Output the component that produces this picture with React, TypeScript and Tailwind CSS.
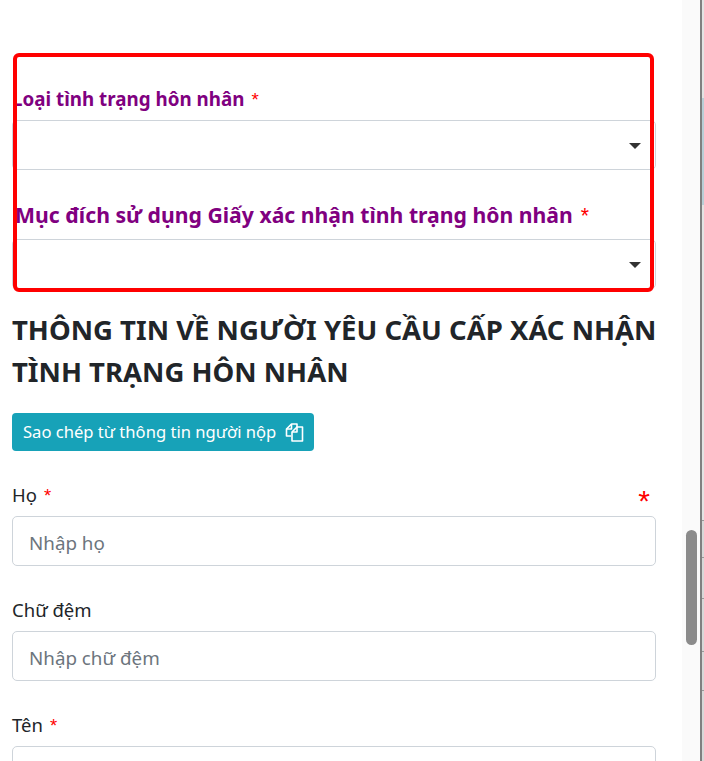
import React from 'react';

const Star: React.FC = () => <span className="ml-[2px] font-['Liberation_Sans',sans-serif] font-normal text-[#ff0000]"> *</span>;

const SelectBox: React.FC = () => (
  <div className="relative h-[50px] rounded-[5px] border border-[#ced4da] bg-white">
    <span className="absolute right-[14px] top-[22px] h-0 w-0 border-x-[6px] border-t-[6px] border-x-transparent border-t-[#333333]" />
  </div>
);

const TextField: React.FC<{ label: string; placeholder?: string; required?: boolean }> = ({ label, placeholder, required }) => (
  <div className="mb-[31px]">
    <label className="mb-[8px] block h-[26px] text-[18.5px] leading-[26px] text-[#212529]">
      {label}
      {required && <Star />}
    </label>
    <div className="flex h-[50px] items-center rounded-[5px] border border-[#ced4da] bg-white px-4 pt-[4px] text-[18.8px] text-[#6c757d]">
      {placeholder}
    </div>
  </div>
);

export default function App() {
  return (
    <div className="flex h-[761px] w-[704px] overflow-hidden bg-white font-['Noto_Sans',sans-serif]">
      <main className="w-[682px] pl-3 pr-[26px]">
        <section className="relative mt-[53px] h-[239px]">
          <div className="pt-[31px]">
            <label className="block h-[36px] text-[18.8px] font-bold leading-[30px] text-[#800080]">
              Loại tình trạng hôn nhân<Star />
            </label>
            <SelectBox />
            <label className="block h-[69px] pl-[3px] pt-[29px] text-[21.2px] font-bold leading-[32px] text-[#800080]">
              Mục đích sử dụng Giấy xác nhận tình trạng hôn nhân<Star />
            </label>
            <SelectBox />
          </div>
          <div className="pointer-events-none absolute left-px top-0 h-[239px] w-[641px] rounded-[6px] border-4 border-[#ff0000]" />
        </section>

        <h2 className="-mr-4 mt-[17px] text-[27.5px] font-bold leading-[42px] text-[#212529]">
          THÔNG TIN VỀ NGƯỜI YÊU CẦU CẤP XÁC NHẬN<br />TÌNH TRẠNG HÔN NHÂN
        </h2>

        <button className="mt-[20px] flex h-[38px] w-[302px] items-center gap-[9px] rounded-[4px] bg-[#17a2b8] pl-[11px] text-[16.6px] text-white">
          Sao chép từ thông tin người nộp
          <svg width="19" height="19" viewBox="0 0 19 19" fill="none" stroke="white" strokeWidth="1.6" strokeLinejoin="round">
            <path d="M6 13H1.5V6L6.5 1H12v3" />
            <path d="M1.5 6h5V1" />
            <path d="M7 9l5-5h5.5v14H7z" />
            <path d="M7 9h5V4" />
          </svg>
        </button>

        <div className="relative mt-[31px]">
          <span className="absolute right-[6px] top-[6px] font-['Liberation_Sans',sans-serif] text-[30px] leading-[26px] text-[#ff0000]">*</span>
          <TextField label="Họ" placeholder="Nhập họ" required />
          <TextField label="Chữ đệm" placeholder="Nhập chữ đệm" />
          <TextField label="Tên" required />
        </div>
      </main>

      <div className="relative w-[18px] bg-[#fafafa]">
        <div className="absolute left-[4px] top-[530px] h-[115px] w-[11px] rounded-full bg-[#8b8b8b]" />
      </div>
      <div className="flex w-[4px] flex-col border-l-2 border-[#808080] bg-[#d8d8d8]">
        <div className="h-[98px] bg-[#e3e3e3]" />
        <div className="h-[107px] bg-[#b9ced6]" />
        <div className="h-[316px] border-b border-[#999999] bg-[#e3e3e3]" />
        <div className="h-[37px] border-b border-[#999999]" />
        <div className="h-[41px] border-b border-[#999999]" />
        <div className="h-[53px] border-b border-[#999999]" />
        <div className="h-[39px] border-b border-[#999999]" />
      </div>
    </div>
  );
}
